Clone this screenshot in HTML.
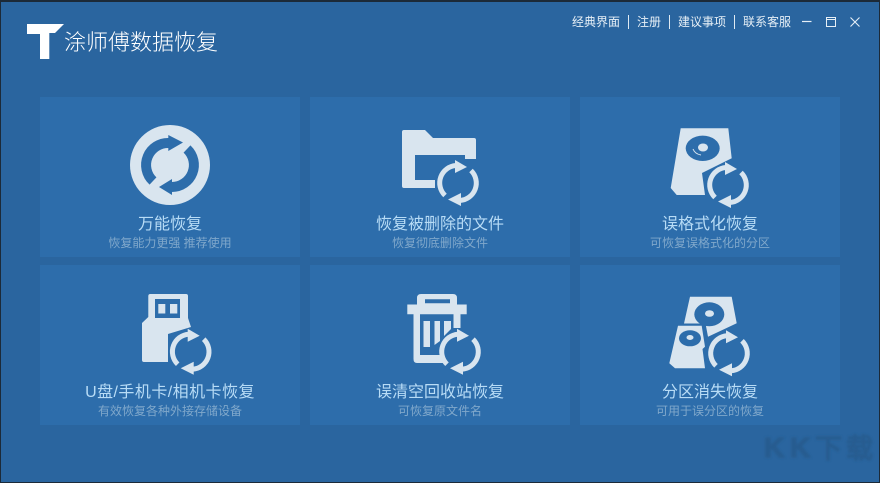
<!DOCTYPE html>
<html><head><meta charset="utf-8">
<style>
html,body{margin:0;padding:0}
body{width:880px;height:483px;overflow:hidden;position:relative;background:#2a659f;font-family:"Liberation Sans","Noto Sans CJK SC",sans-serif}
.edge{position:absolute;background:#1c2a38}
.card{position:absolute;width:260px;height:160px;background:#2d6dab}
.t,.s{position:absolute;left:0;width:100%;text-align:center;white-space:nowrap}
.t{top:118px;font-size:16px;line-height:20px;color:#b8dcf6}
.s{top:138px;font-size:12px;line-height:16px;color:#80a8cb}
.m{position:absolute;top:14px;font-size:12px;line-height:16px;color:#e6eff6;white-space:nowrap}
.b{position:absolute;top:15px;width:1px;height:14px;background:#dfeaf3}
.title{position:absolute;left:64px;top:27px;font-size:22px;line-height:32px;color:#fff;font-weight:300;white-space:nowrap}
svg{position:absolute;left:0;top:0}
</style></head>
<body>
<div class="card" style="left:40px;top:97px"><div class="t">万能恢复</div><div class="s">恢复能力更强 推荐使用</div></div>
<div class="card" style="left:310px;top:97px"><div class="t">恢复被删除的文件</div><div class="s">恢复彻底删除文件</div></div>
<div class="card" style="left:580px;top:97px"><div class="t">误格式化恢复</div><div class="s">可恢复误格式化的分区</div></div>
<div class="card" style="left:40px;top:265px"><div class="t" style="letter-spacing:.45px">U盘/手机卡/相机卡恢复</div><div class="s">有效恢复各种外接存储设备</div></div>
<div class="card" style="left:310px;top:265px"><div class="t">误清空回收站恢复</div><div class="s">可恢复原文件名</div></div>
<div class="card" style="left:580px;top:265px"><div class="t">分区消失恢复</div><div class="s">可用于误分区的恢复</div></div>

<svg width="880" height="483" viewBox="0 0 880 483">
<defs>
<g id="r">
<path d="M-13 12.500A17.500 17.500 0 0 1-2-17.500M13-12.500A17.500 17.500 0 0 1 2 17.500" fill="none" stroke="#d9e5ef" stroke-width="5"/>
<path d="M-3-23L9-16-3-10ZM3 10L-10 16.500 3 23Z" fill="#d9e5ef"/>
</g>
<filter id="bl" x="-10%" y="-20%" width="120%" height="140%"><feGaussianBlur stdDeviation="1"/></filter>
</defs>
<!-- logo -->
<path d="M27 24H64L55 33H49.300V59H40V34H27Z" fill="#fff"/>
<!-- main -->
<circle cx="170" cy="165" r="40" fill="#d9e5ef"/>
<path d="M153 181A22 22 0 0 1 169 143M187 149A22 22 0 0 1 172 187" fill="none" stroke="#2d6dab" stroke-width="10"/>
<path d="M168.300 135L183 142.500 168.300 151ZM172 179L159 187 172 195Z" fill="#2d6dab"/>
<!-- folder -->
<path d="M402 132Q402 130 404 130H425L433 138H474Q476 138 476 140V159H465V155H415V180H435V188H404Q402 188 402 186Z" fill="#d9e5ef"/>
<use href="#r" x="458" y="183"/>
<!-- disk -->
<path d="M680.700 128.300H728.300L731.700 158.300 702 173 705 195H676.700L670.700 188Z" fill="#d9e5ef"/>
<ellipse cx="702.700" cy="148.300" rx="17" ry="12.700" fill="#2d6dab"/>
<ellipse cx="703" cy="147.500" rx="5" ry="4" fill="#d9e5ef"/>
<path d="M693 149Q695 154 701 155" fill="none" stroke="#d9e5ef" stroke-width="1"/>
<use href="#r" x="728" y="185"/>
<!-- usb -->
<path d="M148.300 296Q148.300 294 150.300 294H186Q188 294 188 296V318L191 327 168 334V362H144Q142 362 142 360V323L148.300 317Z" fill="#d9e5ef"/>
<rect x="155" y="299" width="25" height="19" fill="#2d6dab"/>
<rect x="158.300" y="304" width="7" height="9.500" fill="#d9e5ef"/>
<rect x="170" y="304" width="7.300" height="9.500" fill="#d9e5ef"/>
<use href="#r" x="190.700" y="351.700"/>
<!-- trash -->
<path d="M417 304.500V298Q417 294 421 294H453Q457 294 457 298V304.500H466.700V314.300H460.500V328H453.500V314.300H420V355H443V363H417Q413.500 363 413.500 359V314.300H407.300V304.500ZM425 299.300V303.300H450V299.300Z" fill="#d9e5ef" fill-rule="evenodd"/>
<path d="M423.500 321H430V347H423.500ZM434.500 321H440V341L434.500 345ZM444 321H451V329L444 336Z" fill="#d9e5ef"/>
<use href="#r" x="460" y="351.700"/>
<!-- partition -->
<path d="M690 296.700H731.700L736.700 323.300 708 336.700 705.500 323.500H684Z" fill="#d9e5ef"/>
<ellipse cx="709.300" cy="314.300" rx="15" ry="12" fill="#2d6dab"/>
<ellipse cx="709.500" cy="313.500" rx="4.500" ry="3.300" fill="#d9e5ef"/>
<path d="M678 325.700H701.700L705 346.700 702.500 349 705 368.300H675L669.300 363.300Z" fill="#d9e5ef"/>
<ellipse cx="690" cy="338.300" rx="11" ry="8" fill="#2d6dab"/>
<ellipse cx="690" cy="337.500" rx="3.500" ry="2.500" fill="#d9e5ef"/>
<use href="#r" x="729" y="353.300"/>
<!-- window controls -->
<path d="M802 21.500H811.500" stroke="#e6eff6" stroke-width="1.200"/>
<rect x="826.500" y="17.500" width="9" height="9" fill="none" stroke="#e6eff6"/>
<path d="M826.500 19.500H835.500" stroke="#e6eff6"/>
<path d="M850.500 17.500L859.500 26.500M859.500 17.500L850.500 26.500" stroke="#e6eff6" stroke-width="1.100"/>
<!-- watermark -->
<g filter="url(#bl)" fill="#285c8f" stroke="#285c8f" stroke-width="1.500" opacity=".9">
<text x="764" y="457" font-size="28" font-weight="700" font-family="Liberation Sans">K</text>
<text x="790" y="457" font-size="28" font-weight="700" font-family="Liberation Sans">K</text>
<text x="815" y="458" font-size="27" font-family="Noto Sans CJK SC, sans-serif">下</text>
<text x="846" y="458" font-size="27" font-family="Noto Sans CJK SC, sans-serif">载</text>
</g>
</svg>

<div class="title">涂师傅数据恢复</div>
<div class="m" style="left:572px">经典界面</div><div class="b" style="left:628px"></div>
<div class="m" style="left:637px">注册</div><div class="b" style="left:669px"></div>
<div class="m" style="left:678px">建议事项</div><div class="b" style="left:734px"></div>
<div class="m" style="left:743px">联系客服</div>

<div class="edge" style="left:0;top:0;width:880px;height:2px"></div>
<div class="edge" style="left:0;top:0;width:1px;height:483px"></div>
<div class="edge" style="right:0;top:0;width:1px;height:483px"></div>
<div class="edge" style="left:0;bottom:0;width:880px;height:1px"></div>
</body></html>
